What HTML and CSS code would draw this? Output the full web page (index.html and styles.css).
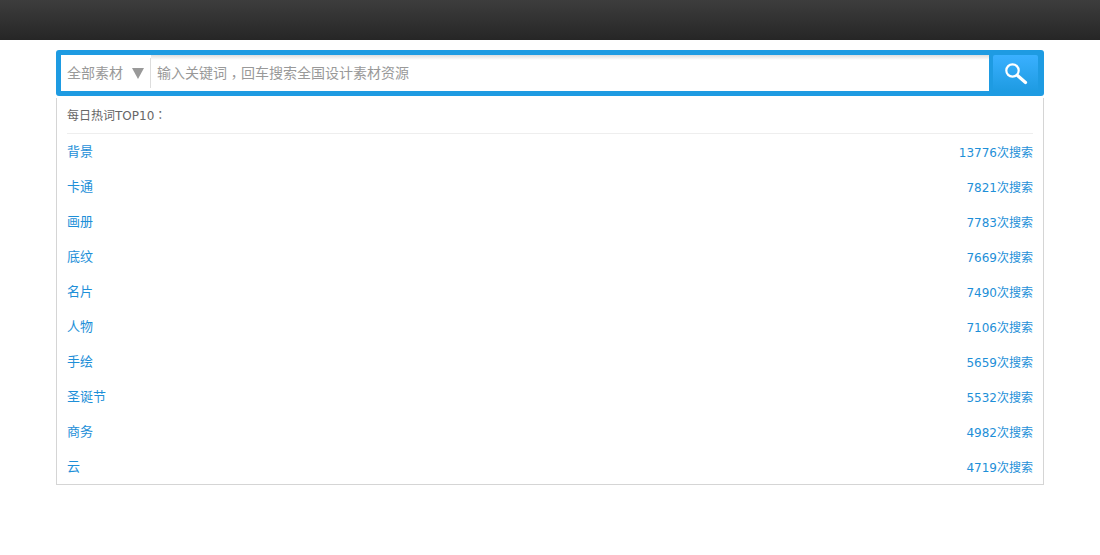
FILE: index.html
```html
<!DOCTYPE html>
<html lang="zh-CN">
<head>
<meta charset="utf-8">
<title>搜索</title>
<link rel="stylesheet" href="styles.css">
</head>
<body>
<div class="topbar"></div>
<main class="wrap">
  <form class="search">
    <div class="scope"><span class="scope-label">全部素材</span><span class="scope-arrow"></span></div>
    <div class="query">输入关键词<span class="comma" lang="zh-TW">，</span>回车搜索全国设计素材资源</div>
    <button class="go" type="button" aria-label="搜索">
      <svg width="24" height="24" viewBox="0 0 24 24" fill="none" stroke="#fff">
        <circle cx="8.5" cy="8.5" r="6.2" stroke-width="2.2"/>
        <path d="M13.5 13.5 21.5 20.5" stroke-width="3.2" stroke-linecap="round"/>
      </svg>
    </button>
  </form>
  <section class="panel">
    <div class="panel-title">每日热词TOP10<span class="punct" lang="zh-TW">：</span></div>
    <ul class="list">
      <li class="row"><span>背景</span><span class="count">13776次搜索</span></li>
      <li class="row"><span>卡通</span><span class="count">7821次搜索</span></li>
      <li class="row"><span>画册</span><span class="count">7783次搜索</span></li>
      <li class="row"><span>底纹</span><span class="count">7669次搜索</span></li>
      <li class="row"><span>名片</span><span class="count">7490次搜索</span></li>
      <li class="row"><span>人物</span><span class="count">7106次搜索</span></li>
      <li class="row"><span>手绘</span><span class="count">5659次搜索</span></li>
      <li class="row"><span>圣诞节</span><span class="count">5532次搜索</span></li>
      <li class="row"><span>商务</span><span class="count">4982次搜索</span></li>
      <li class="row"><span>云</span><span class="count">4719次搜索</span></li>
    </ul>
  </section>
</main>
</body>
</html>
```
FILE: styles.css
```css
* { box-sizing: border-box; }
html, body { margin: 0; padding: 0; }
body {
  background: #fff;
  font-family: "DejaVu Sans", "Noto Sans CJK SC", sans-serif;
  font-size: 13px;
  color: #666;
}
.punct, .comma { font-family: "Noto Sans CJK TC", sans-serif; }
.comma { vertical-align: -4px; line-height: 1; }
.topbar {
  height: 40px;
  background: linear-gradient(#3d3d3d, #262626);
}
.wrap {
  width: 988px;
  margin: 10px auto 0;
}
.search {
  display: flex;
  height: 46px;
  margin: 0;
  background: #1e9be2;
  border-radius: 3px;
  padding: 5px 6px 5px 5px;
}
.scope {
  flex: none;
  width: 90px;
  display: flex;
  align-items: center;
  background: #fff;
  padding: 0 0 0 6px;
  color: #999;
  font-size: 14px;
  position: relative;
}
.scope::after {
  content: "";
  position: absolute;
  right: 0;
  top: 3px;
  bottom: 3px;
  width: 1px;
  background: #ddd;
}
.scope-label { width: 65px; margin-bottom: 2px; }
.scope-arrow {
  width: 0;
  height: 0;
  margin-top: 1px;
  border-left: 6px solid transparent;
  border-right: 6px solid transparent;
  border-top: 11px solid #999;
}
.query {
  flex: 1;
  background: linear-gradient(#ddd, #fff 5px);
  color: #999;
  font-size: 14px;
  line-height: 36px;
  padding-left: 6px;
}
.go {
  flex: none;
  width: 45px;
  margin-left: 4px;
  padding: 2px 0 0 0;
  border: 0;
  border-radius: 2px;
  background: linear-gradient(#3ab0ff, #1e9be2);
  display: flex;
  align-items: center;
  justify-content: center;
}
.panel {
  margin-top: 2px;
  height: 387px;
  border: 1px solid #d5d5d5;
  border-top: 0;
  padding: 0 10px;
}
.panel-title {
  height: 36px;
  line-height: 33px;
  font-size: 12px;
  border-bottom: 1px solid #eee;
  color: #666;
}
.list {
  list-style: none;
  margin: 0;
  padding: 0;
}
.row {
  display: flex;
  justify-content: space-between;
  height: 35px;
  line-height: 35px;
  color: #1e8fd8;
}
.count { font-size: 12px; line-height: 39px; }
```
